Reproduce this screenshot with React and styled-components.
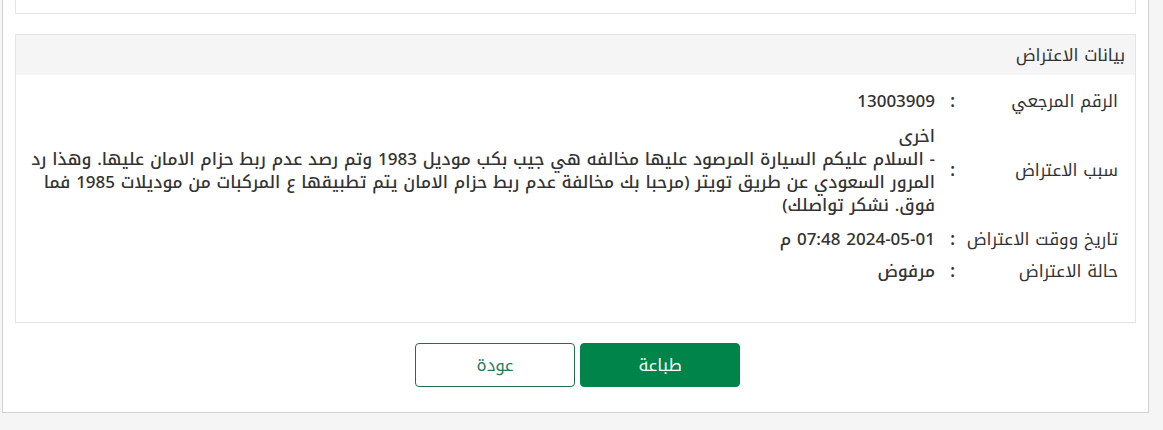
import React from 'react';
import styled, { createGlobalStyle } from 'styled-components';

const GlobalStyle = createGlobalStyle`
  html, body {
    margin: 0;
    padding: 0;
    background: #f5f5f5;
  }
  body {
    font-family: 'Noto Kufi Arabic', 'Noto Sans', sans-serif;
    font-size: 17px;
    color: #333;
  }
`;

const Shell = styled.div`
  direction: rtl;
  margin: -61px 14px 0 2px;
  background: #fff;
  border: 1px solid #d2d2d2;
  padding: 0 12px 25px;
`;

const Card = styled.section`
  border: 1px solid #e4e4e4;
  background: #fff;
  margin-bottom: 20px;
`;

const EmptyCard = styled(Card)`
  height: 72px;
`;

const CardHeader = styled.div`
  background: #f5f5f5;
  height: 40px;
  display: flex;
  align-items: center;
  padding: 0 10px;
  color: #333;
`;

const CardBody = styled.div`
  padding: 10px 17px 35px;
  display: flex;
  flex-direction: column;
`;

const Row = styled.div`
  display: flex;
  align-items: center;
  min-height: 32px;
  line-height: 23px;
`;

const Label = styled.div`
  width: 157px;
  flex-shrink: 0;
`;

const Colon = styled.div`
  width: 26px;
  flex-shrink: 0;
  box-sizing: border-box;
  padding-right: 6px;
  text-align: right;
  font-weight: 600;
`;

const Value = styled.div`
  flex: 1;
  font-weight: 500;
  white-space: nowrap;
  padding: ${(p) => (p.$tall ? '8px 0 6px' : '0')};
`;

const Actions = styled.div`
  display: flex;
  justify-content: center;
  gap: 5px;
  padding-left: 4px;
`;

const Button = styled.button`
  width: 160px;
  height: 44px;
  border-radius: 4px;
  font-family: inherit;
  font-size: 17px;
  cursor: pointer;
  border: 1px solid #1f6f4e;
  background: ${(p) => (p.$primary ? '#00844a' : '#fff')};
  color: ${(p) => (p.$primary ? '#fff' : '#2f7a59')};
  ${(p) => p.$primary && 'border-color: #00844a;'}
`;

const rows = [
  { label: 'الرقم المرجعي', value: '13003909' },
  {
    label: 'سبب الاعتراض',
    tall: true,
    value: [
      'اخرى',
      '- السلام عليكم السيارة المرصود عليها مخالفه هي جيب بكب موديل 1983 وتم رصد عدم ربط حزام الامان عليها. وهذا رد',
      'المرور السعودي عن طريق تويتر (مرحبا بك مخالفة عدم ربط حزام الامان يتم تطبيقها ع المركبات من موديلات 1985 فما',
      'فوق. نشكر تواصلك)',
    ],
  },
  { label: 'تاريخ ووقت الاعتراض', value: '2024-05-01 07:48 م' },
  { label: 'حالة الاعتراض', value: 'مرفوض' },
];

export default function App() {
  return (
    <>
      <GlobalStyle />
      <Shell>
        <EmptyCard />
        <Card>
          <CardHeader>بيانات الاعتراض</CardHeader>
          <CardBody>
            {rows.map((row) => (
              <Row key={row.label}>
                <Label>{row.label}</Label>
                <Colon>:</Colon>
                <Value $tall={row.tall}>
                  {Array.isArray(row.value)
                    ? row.value.map((line) => <div key={line}>{line}</div>)
                    : row.value}
                </Value>
              </Row>
            ))}
          </CardBody>
        </Card>
        <Actions>
          <Button $primary>طباعة</Button>
          <Button>عودة</Button>
        </Actions>
      </Shell>
    </>
  );
}
